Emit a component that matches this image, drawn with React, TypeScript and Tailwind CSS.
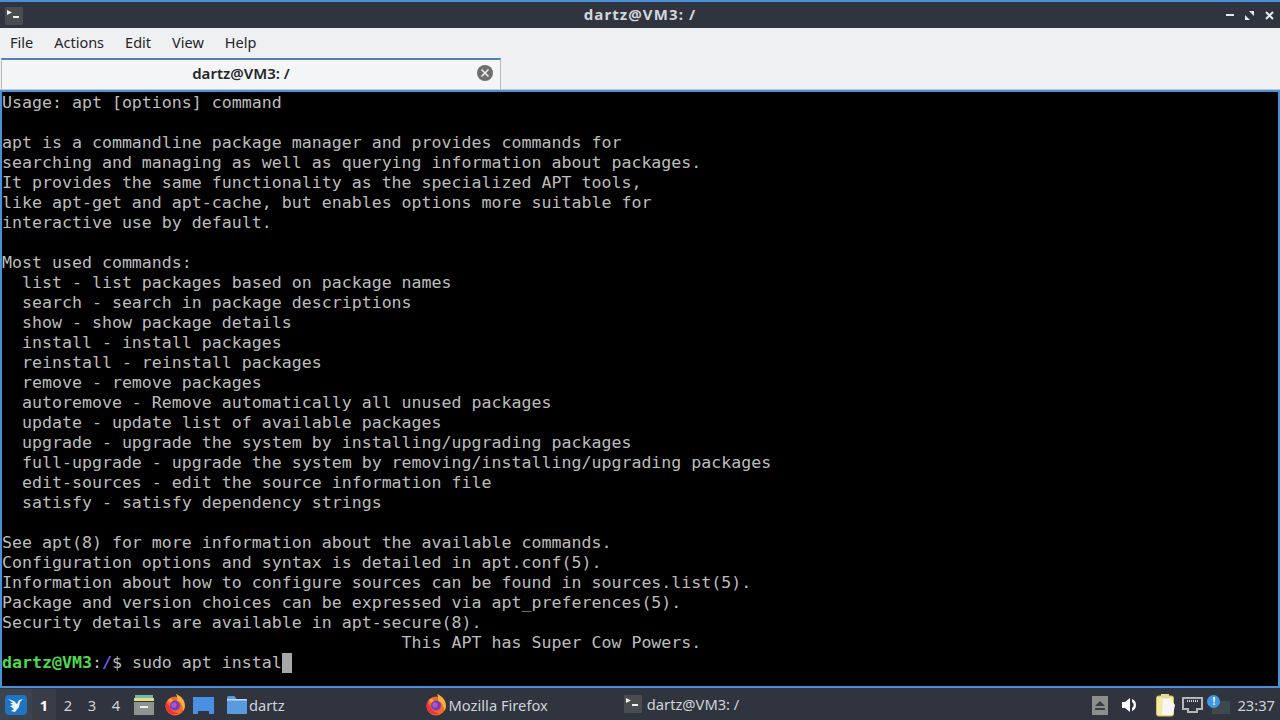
import React from 'react';

const ui = "font-['Noto_Sans','Open_Sans',sans-serif]";

const outputLines = `Usage: apt [options] command

apt is a commandline package manager and provides commands for
searching and managing as well as querying information about packages.
It provides the same functionality as the specialized APT tools,
like apt-get and apt-cache, but enables options more suitable for
interactive use by default.

Most used commands:
  list - list packages based on package names
  search - search in package descriptions
  show - show package details
  install - install packages
  reinstall - reinstall packages
  remove - remove packages
  autoremove - Remove automatically all unused packages
  update - update list of available packages
  upgrade - upgrade the system by installing/upgrading packages
  full-upgrade - upgrade the system by removing/installing/upgrading packages
  edit-sources - edit the source information file
  satisfy - satisfy dependency strings

See apt(8) for more information about the available commands.
Configuration options and syntax is detailed in apt.conf(5).
Information about how to configure sources can be found in sources.list(5).
Package and version choices can be expressed via apt_preferences(5).
Security details are available in apt-secure(8).
                                        This APT has Super Cow Powers.`;

const TerminalIcon = ({ size = 18 }: { size?: number }) => (
  <svg width={size} height={size} viewBox="0 0 18 18">
    <rect width="18" height="18" rx="1" fill="#4a4d50" />
    <path d="M2 3l5 2.5L2 8z" fill="#f2f2f2" />
    <rect x="8" y="9" width="6" height="2" fill="#f2f2f2" />
  </svg>
);

const FirefoxIcon = () => (
  <svg width="22" height="22" viewBox="0 0 22 22">
    <circle cx="11" cy="12" r="9.5" fill="#f2692c" />
    <path d="M12 0c5 2 9 6 9 12 0 2-1 4-2 5 0-5-2-9-6-10 1-2 0-5-1-7z" fill="#fbb03b" />
    <path d="M2 8c-1 3-1 7 2 10 3 3 8 3 11 1-4 0-8-2-9-6z" fill="#e8353e" />
    <circle cx="11" cy="11.5" r="5" fill="#7b3bb5" />
    <circle cx="10" cy="11" r="2.600" fill="#a65ad0" />
    <path d="M4 6l3-2 2 3-3 2z" fill="#f9a03a" />
  </svg>
);

const FolderIcon = () => (
  <svg width="22" height="20" viewBox="0 0 22 20">
    <path d="M1 2.500A1.500 1.500 0 0 1 2.500 1h6l2 3H21v14a1 1 0 0 1-1 1H2a1 1 0 0 1-1-1z" fill="#5a9bdf" />
    <rect x="1" y="4" width="20" height="1.500" fill="#bcd9f5" />
  </svg>
);

const TrayIcons = () => (
  <div className="flex items-center">
    <div className="w-4 h-[19px] mr-[13px] bg-[#8d8f8f] flex flex-col items-center justify-center gap-[2px]">
      <div className="w-0 h-0 border-x-[5px] border-x-transparent border-b-[5px] border-b-[#3a3d42]" />
      <div className="w-[10px] h-[2px] bg-[#3a3d42]" />
    </div>
    <svg className="mr-[17px]" width="18" height="16" viewBox="0 0 18 16">
      <path d="M1 5h3l5-4v14l-5-4H1z" fill="#fff" />
      <path d="M11 2a6.500 6.500 0 0 1 0 12V11a3.500 3.500 0 0 0 0-6z" fill="#fff" />
    </svg>
    <svg className="mr-[6px]" width="20" height="24" viewBox="0 0 20 24">
      <rect x="0.500" y="3" width="17" height="20" rx="2" fill="#f4e9a8" stroke="#d8c04a" />
      <rect x="5" y="1" width="8" height="4" fill="#e0d9a0" />
      <path d="M7 6h7l5 6-2 10H6z" fill="#f6f6f6" />
    </svg>
    <svg className="mr-[3px]" width="21" height="18" viewBox="0 0 21 18">
      <path d="M1 2h19v11h-5v3H6v-3H1z" fill="none" stroke="#b4b6b8" strokeWidth="2" />
      <path d="M5 5h11" stroke="#d8dadc" strokeWidth="2" strokeDasharray="1 1" />
    </svg>
    <div className="relative w-[22px] h-[20px] ml-[1px]">
      <div className="absolute left-[5px] top-[6px] w-[18px] h-[13px] bg-[#3f4a50]" />
      <div className="absolute left-0 top-0 w-[13px] h-[13px] rounded-full bg-[#3d9ae8] text-white text-[10px] leading-[13px] text-center font-bold">!</div>
    </div>
  </div>
);

export default function App() {
  return (
    <div className={`w-[1280px] h-[720px] flex flex-col overflow-hidden bg-[#eff0f1] ${ui}`}>
      {/* window title */}
      <div className="h-[28px] shrink-0 bg-[#2f343f] border-t-2 border-[#4a90d9] flex items-center relative">
        <div className="ml-[5px] mt-[1px]">
          <TerminalIcon />
        </div>
        <div className="flex-1 text-center text-[15px] leading-[22px] font-bold tracking-[1.1px] text-[#d3d6da] pb-[2px] pl-[31px]">dartz@VM3: /</div>
        <div className="flex items-center gap-[11px] mr-[6px] text-[#e6e8ea]">
          <div className="w-[8px] h-[2px] bg-[#e6e8ea]" />
          <svg width="9" height="9" viewBox="0 0 9 9">
            <path d="M0 9V4l5 5zM9 0v5L4 0z" fill="#e6e8ea" />
          </svg>
          <svg width="9" height="9" viewBox="0 0 9 9">
            <path d="M1 1l7 7M8 1L1 8" stroke="#e6e8ea" strokeWidth="2" />
          </svg>
        </div>
      </div>

      {/* menu bar */}
      <div className="h-[30px] shrink-0 flex items-center gap-[21px] px-[10px] text-[14.5px] text-[#232629]">
        <span>File</span>
        <span>Actions</span>
        <span>Edit</span>
        <span>View</span>
        <span>Help</span>
      </div>

      {/* tab bar */}
      <div className="h-[32px] shrink-0 flex items-end border-b border-[#c6c8c9]">
        <div className="ml-[1px] w-[500px] h-[31px] border-t-2 border-r border-l border-t-[#4f83b8] border-x-[#b8babb] bg-[#f4f5f6] flex items-center relative">
          <div className="flex-1 text-center text-[15px] font-semibold text-[#232629] pr-[20px] pb-[3px]">dartz@VM3: /</div>
          <div className="absolute right-[7px] top-[5px] w-4 h-4 rounded-full bg-[#6e6e6e] flex items-center justify-center">
            <svg width="10" height="10" viewBox="0 0 10 10">
              <path d="M1.500 1.500l7 7M8.500 1.500l-7 7" stroke="#f2f2f2" strokeWidth="1.500" />
            </svg>
          </div>
        </div>
      </div>

      {/* terminal */}
      <div className="h-[598px] shrink-0 bg-black border-y-2 border-x-2 border-[#4a90d9] pt-px font-['DejaVu_Sans_Mono',monospace] text-[16.6px] leading-[20px] text-[#bdbdbd] overflow-hidden">
        <pre className="font-['DejaVu_Sans_Mono',monospace]">{outputLines}</pre>
        <div className="flex h-[20px] whitespace-pre">
          <span className="font-bold text-[#4fd84f]">dartz@VM3</span>
          <span>:</span>
          <span className="font-bold text-[#6a5cf0]">/</span>
          <span>$ sudo apt instal</span>
          <span className="w-[10px] h-[20px] bg-[#a8a8a8]" />
        </div>
      </div>

      {/* panel */}
      <div className="h-[34px] shrink-0 bg-[#2f343f] flex items-center text-[14.7px] text-[#d0d3d8]">
        <div className="w-[32px] h-[32px] bg-[#3c424e] flex items-center justify-center">
          <svg width="22" height="20" viewBox="0 0 22 20">
            <rect width="22" height="20" rx="4" fill="#1f74c4" />
            <path d="M3 4l6 2 3 3 2-4 4-1-3 3-1 5-4 5-4-1 3-2-4-3 3-1-3-2 3 0z" fill="#eaf4fd" />
          </svg>
        </div>
        <div className="w-[24px] h-[32px] bg-[#383d48] flex items-center justify-center font-bold text-white">1</div>
        <div className="w-[24px] text-center">2</div>
        <div className="w-[24px] text-center">3</div>
        <div className="w-[24px] text-center">4</div>
        <svg className="ml-[5px]" width="22" height="22" viewBox="0 0 22 22">
          <rect x="2" y="1" width="18" height="3" fill="#6fbd9c" />
          <rect x="1" y="4" width="20" height="3" fill="#e4d98a" />
          <rect x="1" y="8" width="20" height="13" fill="#8e9490" />
          <rect x="7" y="12" width="8" height="2" fill="#f0f0f0" />
        </svg>
        <div className="ml-[9px]">
          <FirefoxIcon />
        </div>
        <div className="ml-[7px] w-[21px] h-[17px] bg-[#4a90e2] relative">
          <div className="absolute left-[5px] bottom-0 w-[11px] h-[3px] bg-[#2f343f]" />
        </div>
        <div className="ml-[12px] flex items-center">
          <FolderIcon />
          <span className="ml-[1px]">dartz</span>
        </div>
        <div className="ml-[140px] flex items-center">
          <FirefoxIcon />
          <span className="ml-[2px]">Mozilla Firefox</span>
        </div>
        <div className="ml-[71px] w-[196px] h-[34px] pl-[5px] flex items-center border-b-2 border-[#4a90d9]">
          <TerminalIcon />
          <span className="ml-[5px]">dartz@VM3: /</span>
        </div>
        <div className="ml-auto flex items-center">
          <TrayIcons />
          <span className="ml-[8px] mr-[5px]">23:37</span>
        </div>
      </div>
    </div>
  );
}
